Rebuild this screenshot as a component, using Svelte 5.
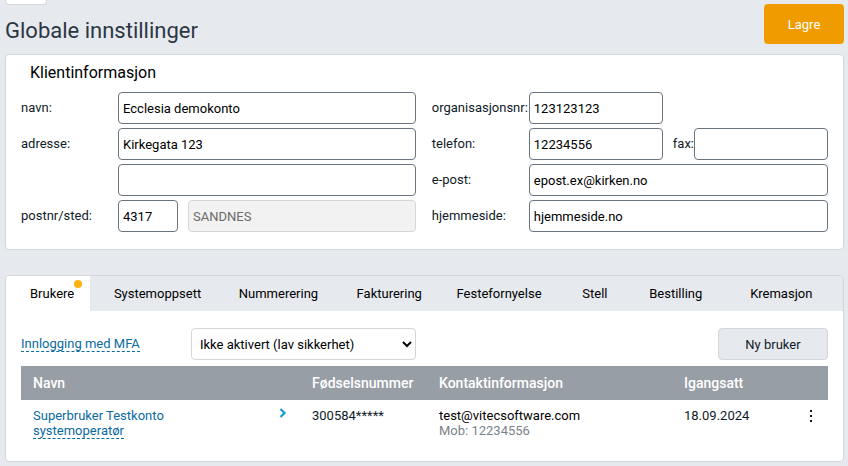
<script lang="ts">
  let activeTab = $state('Brukere');
  let mfa = $state('none');

  let client = $state({
    name: 'Ecclesia demokonto',
    address1: 'Kirkegata 123',
    address2: '',
    zip: '4317',
    city: 'SANDNES',
    orgNumber: '123123123',
    phone: '12234556',
    fax: '',
    email: 'epost.ex@kirken.no',
    website: 'hjemmeside.no'
  });

  const tabs = [
    { label: 'Brukere', notice: true },
    { label: 'Systemoppsett' },
    { label: 'Nummerering' },
    { label: 'Fakturering' },
    { label: 'Festefornyelse' },
    { label: 'Stell' },
    { label: 'Bestilling' },
    { label: 'Kremasjon' }
  ];

  const users = [
    {
      name: 'Superbruker Testkonto',
      role: 'systemoperatør',
      birthNumber: '300584*****',
      email: 'test@vitecsoftware.com',
      mobile: '12234556',
      started: '18.09.2024'
    }
  ];
</script>

<div class="page">
  <header class="top">
    <div class="heading">
      <div class="stub"></div>
      <h1>Globale innstillinger</h1>
    </div>
    <button type="button" class="save">Lagre</button>
  </header>

  <section class="panel client">
    <h2>Klientinformasjon</h2>
    <form class="columns">
      <div class="fields">
        <label for="name">navn:</label>
        <input id="name" type="text" bind:value={client.name} />

        <label for="address1">adresse:</label>
        <input id="address1" type="text" bind:value={client.address1} />

        <input class="second" type="text" aria-label="adresse, linje 2" bind:value={client.address2} />

        <label for="zip">postnr/sted:</label>
        <div class="row">
          <input id="zip" class="zip" type="text" bind:value={client.zip} />
          <input type="text" aria-label="sted" value={client.city} disabled />
        </div>
      </div>

      <div class="fields">
        <label for="org">organisasjonsnr:</label>
        <div class="row">
          <input id="org" class="short" type="text" bind:value={client.orgNumber} />
        </div>

        <label for="phone">telefon:</label>
        <div class="row">
          <input id="phone" class="short" type="text" bind:value={client.phone} />
          <div class="fax">
            <label for="fax">fax:</label>
            <input id="fax" class="short" type="text" bind:value={client.fax} />
          </div>
        </div>

        <label for="email">e-post:</label>
        <input id="email" type="text" bind:value={client.email} />

        <label for="website">hjemmeside:</label>
        <input id="website" type="text" bind:value={client.website} />
      </div>
    </form>
  </section>

  <section class="panel">
    <div class="tabs" role="tablist">
      {#each tabs as tab}
        <button
          type="button"
          role="tab"
          class="tab"
          class:active={tab.label === activeTab}
          aria-selected={tab.label === activeTab}
          onclick={() => (activeTab = tab.label)}
        >
          {tab.label}
          {#if tab.notice}<span class="dot"></span>{/if}
        </button>
      {/each}
    </div>

    <div class="content">
      <div class="toolbar">
        <label for="mfa"><span class="hint">Innlogging med MFA</span></label>
        <select id="mfa" bind:value={mfa}>
          <option value="none">Ikke aktivert (lav sikkerhet)</option>
        </select>
        <button type="button" class="new-user">Ny bruker</button>
      </div>

      <table>
        <thead>
          <tr>
            <th class="col-name">Navn</th>
            <th class="col-birth">Fødselsnummer</th>
            <th class="col-contact">Kontaktinformasjon</th>
            <th>Igangsatt</th>
            <th class="col-menu"></th>
          </tr>
        </thead>
        <tbody>
          {#each users as user}
            <tr>
              <td>
                <div class="user">
                  <a href="#user">{user.name}<br /><span class="hint">{user.role}</span></a>
                  <svg width="9" height="10" viewBox="0 0 9 10" aria-hidden="true">
                    <path d="M1.5 1 L5.5 5 L1.5 9" fill="none" stroke="#1a9ad0" stroke-width="2.2" />
                  </svg>
                </div>
              </td>
              <td>{user.birthNumber}</td>
              <td>
                <div class="email">{user.email}</div>
                <div class="mobile">Mob: {user.mobile}</div>
              </td>
              <td>{user.started}</td>
              <td class="col-menu">
                <button type="button" class="menu" aria-label="Meny">
                  <svg width="2" height="12" viewBox="0 0 2 12" shape-rendering="crispEdges">
                    <path d="M0 0h2v2h-2z M0 5h2v2h-2z M0 10h2v2h-2z" fill="#111a24" />
                  </svg>
                </button>
              </td>
            </tr>
          {/each}
        </tbody>
      </table>
    </div>
  </section>
</div>

<style>
  :global(body) {
    background: #e6e9ee;
  }

  .page {
    padding: 0 4px 4px 5px;
    font-family: Roboto, "Liberation Sans", sans-serif;
    font-size: 13px;
    line-height: 15px;
    color: #0f1b28;
  }

  .page * {
    box-sizing: border-box;
  }

  button,
  input,
  select {
    font: inherit;
    margin: 0;
  }

  button {
    cursor: pointer;
  }

  .top {
    display: flex;
    justify-content: space-between;
    height: 54px;
  }

  .stub {
    width: 42px;
    height: 5px;
    background: #fff;
    border: 1px solid #d3d6da;
    border-top: 0;
    border-radius: 0 0 4px 4px;
  }

  h1 {
    margin: 13px 0 0;
    font-size: 22px;
    font-weight: 400;
    line-height: 26px;
    color: #2b3743;
  }

  .save {
    width: 80px;
    height: 40px;
    margin-top: 4px;
    border: 0;
    border-radius: 4px;
    background: #f09c00;
    color: #fff;
  }

  .panel {
    background: #fff;
    border: 1px solid #d3d6da;
    border-radius: 4px;
    overflow: hidden;
  }

  .client {
    margin-bottom: 25px;
    padding: 8px 15px 17px;
  }

  h2 {
    margin: 0 0 9px 9px;
    font-size: 16px;
    font-weight: 400;
    line-height: 20px;
    color: #000;
  }

  .columns {
    display: grid;
    grid-template-columns: 1fr 1fr;
    gap: 16px;
  }

  .fields {
    display: grid;
    grid-template-columns: 97px 1fr;
    grid-auto-rows: 32px;
    row-gap: 4px;
  }

  .fields label {
    padding-top: 8px;
    white-space: nowrap;
  }

  .second {
    grid-column: 2;
  }

  .row {
    display: flex;
    gap: 10px;
  }

  .fax {
    display: flex;
    flex: 1;
    justify-content: space-between;
  }

  input {
    width: 100%;
    min-width: 0;
    height: 32px;
    padding: 1px 4px 0;
    border: 1px solid #6b7580;
    border-radius: 4px;
    background: #fff;
    color: #000;
  }

  input:disabled {
    border-color: #d3d6da;
    background: #f2f2f2;
    color: #6b6b6b;
  }

  .zip {
    flex: none;
    width: 60px;
  }

  .short {
    flex: none;
    width: 134px;
  }

  .tabs {
    display: grid;
    grid-template-columns: 84fr 125fr 118fr 100fr 126fr 67fr 101fr 117fr;
    background: #e6e9ee;
  }

  .tab {
    position: relative;
    height: 35px;
    padding: 0 0 0 24px;
    border: 0;
    background: none;
    color: #000;
    text-align: left;
    white-space: nowrap;
  }

  .tab.active {
    background: #fff;
  }

  .dot {
    position: absolute;
    top: 4px;
    right: 8px;
    width: 8px;
    height: 8px;
    border-radius: 50%;
    background: #ffb30f;
  }

  .content {
    padding: 17px 15px;
  }

  .toolbar {
    display: flex;
    margin-bottom: 6px;
  }

  .toolbar label {
    width: 170px;
    padding-top: 8px;
  }

  .hint {
    border-bottom: 1px dashed #0b6aa0;
    color: #0b6aa0;
  }

  select {
    width: 225px;
    height: 32px;
    padding: 0 4px;
    border: 1px solid #d3d6da;
    border-radius: 4px;
    background: #fff;
    color: #000;
  }

  .new-user {
    width: 110px;
    height: 32px;
    margin-left: auto;
    border: 1px solid #d3d6da;
    border-radius: 4px;
    background: #e6e9ee;
    color: #0f1b28;
  }

  table {
    width: 100%;
    border-collapse: collapse;
    table-layout: fixed;
  }

  th {
    height: 34px;
    padding: 0 12px;
    background: #989ea6;
    color: #fff;
    font-size: 14px;
    font-weight: 500;
    text-align: left;
    white-space: nowrap;
  }

  td {
    height: 44px;
    padding: 8px 12px 0;
    vertical-align: top;
  }

  .col-name {
    width: 279px;
  }

  .col-birth {
    width: 127px;
  }

  .col-contact {
    width: 245px;
  }

  .col-menu {
    width: 40px;
    padding-right: 16px;
    text-align: right;
  }

  .user {
    display: flex;
    justify-content: space-between;
  }

  a {
    color: #0b6aa0;
    text-decoration: none;
  }

  .email {
    color: #000;
  }

  .mobile {
    color: #7b838a;
  }

  .menu {
    padding: 2px 0 0;
    border: 0;
    background: none;
  }

  .menu svg {
    display: block;
  }
</style>
